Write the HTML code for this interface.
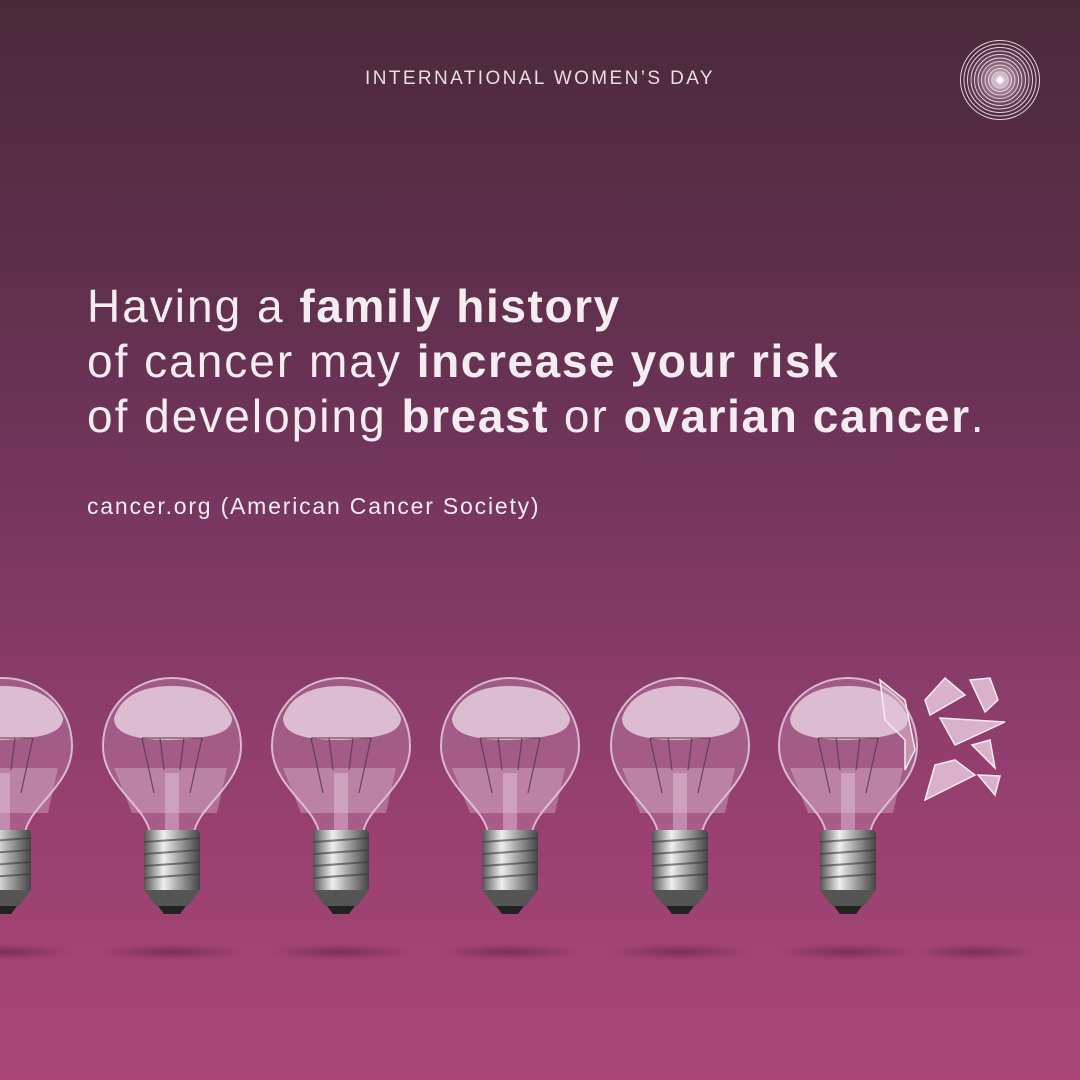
<!DOCTYPE html>
<html><head><meta charset="utf-8"><style>
html,body{margin:0;padding:0}
body{width:1080px;height:1080px;overflow:hidden;position:relative;font-family:"Liberation Sans",sans-serif;
background:linear-gradient(180deg,#4a2a39 0%,#5e2f4a 25%,#7a3762 50%,#984070 75%,#aa4676 100%);color:#f3ecf0}
.hd{position:absolute;top:68px;left:0;width:1080px;text-align:center;font-size:19px;letter-spacing:2.4px;color:#e8dde3}
.main{position:absolute;left:87px;top:279px;font-size:46px;line-height:55px;letter-spacing:2px;white-space:nowrap}
.main b{font-weight:700;letter-spacing:1.6px}
.src{position:absolute;left:87px;top:493px;font-size:23px;letter-spacing:1.8px}
svg{position:absolute;left:0;top:0}
</style></head><body>
<div class="hd">INTERNATIONAL WOMEN’S DAY</div>
<div class="main">Having a <b>family history</b><br>of cancer may <b>increase your risk</b><br>of developing <b>breast</b> or <b>ovarian cancer</b>.</div>
<div class="src">cancer.org (American Cancer Society)</div>
<svg width="1080" height="1080" viewBox="0 0 1080 1080">
<defs>
<radialGradient id="glow"><stop offset="0" stop-color="#fff"/><stop offset="0.3" stop-color="#d8b8cc" stop-opacity="0.6"/><stop offset="1" stop-color="#4a2a39" stop-opacity="0"/></radialGradient>
<linearGradient id="metal" x1="0" x2="1"><stop offset="0" stop-color="#555"/><stop offset="0.35" stop-color="#eee"/><stop offset="0.6" stop-color="#aaa"/><stop offset="1" stop-color="#444"/></linearGradient>
<radialGradient id="sh"><stop offset="0" stop-color="#5a2040" stop-opacity="0.55"/><stop offset="1" stop-color="#5a2040" stop-opacity="0"/></radialGradient>
<g id="bulb">
<ellipse cx="0" cy="274" rx="70" ry="8" fill="url(#sh)"/>
<path d="M-22,155 C-26,128 -69,108 -69,68 C-69,28 -37,0 0,0 C37,0 69,28 69,68 C69,108 26,128 22,155 Z" fill="#c596b7" fill-opacity="0.35" stroke="#d9b9cd" stroke-width="2"/>
<path d="M-58,40 C-50,15 -25,8 0,8 C30,8 52,18 60,40 C60,55 40,60 0,62 C-40,62 -58,55 -58,40 Z" fill="#f0dcea" fill-opacity="0.75"/>
<path d="M-58,90 L55,90 L45,135 L-40,135 Z" fill="#e6c8dc" fill-opacity="0.35"/>
<g stroke="#5a3a4a" stroke-width="1.3" fill="none" opacity="0.8"><path d="M-30,60 L-18,115 M30,60 L18,115 M-12,60 L-8,92 M12,60 L8,92 M-30,60 L30,60"/></g>
<rect x="-7" y="95" width="14" height="60" fill="#e8d0e0" fill-opacity="0.4"/>
<rect x="-28" y="152" width="56" height="62" rx="4" fill="url(#metal)"/>
<g stroke="#3a3a3a" stroke-width="2" opacity="0.6"><path d="M-28,164 L28,160 M-28,176 L28,172 M-28,188 L28,184 M-28,200 L28,196"/></g>
<path d="M-28,212 L28,212 L16,228 L-16,228 Z" fill="#555"/>
<path d="M-14,228 L14,228 L8,236 L-8,236 Z" fill="#222"/>
</g>
</defs>
<circle cx="1000" cy="80" r="40" fill="url(#glow)"/>
<g fill="none" stroke="#e4d0dc" stroke-width="1">
<circle cx="1000" cy="80" r="39.5"/><circle cx="1000" cy="80" r="36"/><circle cx="1000" cy="80" r="32.5"/><circle cx="1000" cy="80" r="29"/><circle cx="1000" cy="80" r="25.5"/><circle cx="1000" cy="80" r="22"/><circle cx="1000" cy="80" r="18.5"/><circle cx="1000" cy="80" r="15"/><circle cx="1000" cy="80" r="11.5"/><circle cx="1000" cy="80" r="8"/></g>
<circle cx="1000" cy="80" r="3" fill="#fff"/>
<use href="#bulb" x="3" y="678"/>
<use href="#bulb" x="172" y="678"/>
<use href="#bulb" x="341" y="678"/>
<use href="#bulb" x="510" y="678"/>
<use href="#bulb" x="680" y="678"/>
<use href="#bulb" x="848" y="678"/>
<ellipse cx="975" cy="952" rx="60" ry="8" fill="url(#sh)"/>
<g fill="#e6c6da" fill-opacity="0.85" stroke="#f6eaf2" stroke-width="1.5">
<path d="M925,700 L945,678 L965,695 L930,715 Z"/>
<path d="M970,680 L990,678 L998,700 L985,712 Z"/>
<path d="M940,718 L1005,722 L955,745 Z"/>
<path d="M972,745 L990,740 L995,768 Z"/>
<path d="M935,765 L955,760 L975,775 L925,800 Z"/>
<path d="M978,775 L1000,776 L995,795 Z"/>
<path d="M880,680 L905,700 L915,750 L905,770 L905,740 L885,720 Z" fill-opacity="0.5"/>
</g>
</svg>
</body></html>
